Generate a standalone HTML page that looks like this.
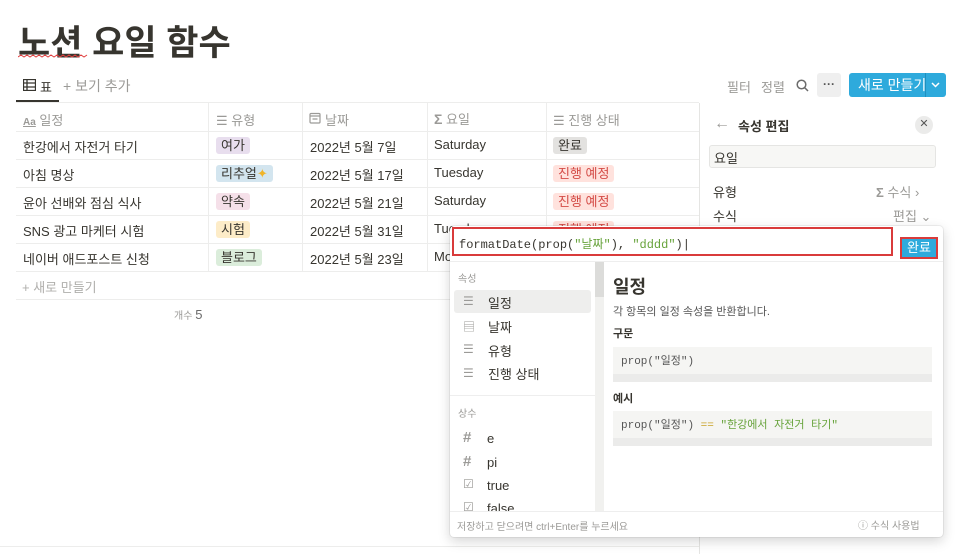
<!DOCTYPE html>
<html><head><meta charset="utf-8"><style>
*{box-sizing:border-box;margin:0;padding:0}
body{width:966px;height:554px;overflow:hidden;background:#fff;font-family:"Liberation Sans","Noto Sans CJK KR",sans-serif;color:#37352f;position:relative;font-size:13px}
.a{position:absolute;white-space:nowrap}
.g{color:#9b9a97}
.tag{position:absolute;height:17px;line-height:17px;padding:0 5px;border-radius:3px;font-size:13px}
.hl{position:absolute;height:1px;background:#ededec}
.vl{position:absolute;width:1px;background:#ededec}
.mono{font-family:"Liberation Mono","Noto Sans CJK KR",monospace}
</style></head><body>
<div class="a" style="left:18px;top:15px;font-size:35px;font-weight:700;color:#37352f">노션 요일 함수</div>
<svg class="a" style="left:18px;top:54px" width="70" height="5"><path d="M0 3 L3 1 L6 3 L9 1 L12 3 L15 1 L18 3 L21 1 L24 3 L27 1 L30 3 L33 1 L36 3 L39 1 L42 3 L45 1 L48 3 L51 1 L54 3 L57 1 L60 3 L63 1 L66 3 L69 1" stroke="#e03e3e" fill="none" stroke-width="1"/></svg>

<svg class="a" style="left:23px;top:79px" width="13" height="12"><rect x="0.5" y="0.5" width="12" height="11" fill="none" stroke="#37352f" stroke-width="1.3"/><path d="M0 4H13M0 8H13M4 0V12" stroke="#37352f" stroke-width="1.3"/></svg>
<div class="a" style="left:40px;top:77px;font-size:13px">표</div>
<div class="a g" style="left:63px;top:76px;font-size:14px">+ 보기 추가</div>
<div class="a" style="left:16px;top:100px;width:43px;height:2px;background:#37352f"></div>
<div class="hl" style="left:16px;top:102px;width:683px"></div>

<div class="a g" style="left:727px;top:77px">필터</div>
<div class="a g" style="left:761px;top:77px">정렬</div>
<svg class="a" style="left:796px;top:79px" width="13" height="13"><circle cx="5.5" cy="5.5" r="4.3" fill="none" stroke="#6b6b6b" stroke-width="1.5"/><path d="M8.5 8.5L12 12" stroke="#6b6b6b" stroke-width="1.5"/></svg>
<div class="a" style="left:817px;top:73px;width:24px;height:24px;background:#efefef;border-radius:3px;text-align:center;line-height:22px;font-size:12px;color:#555;font-weight:700">···</div>
<div class="a" style="left:849px;top:73px;width:97px;height:24px;background:#2eaadc;border-radius:3px;color:#fff;font-size:14px;line-height:24px;padding-left:9px">새로 만들기</div>
<div class="a" style="left:925px;top:73px;width:1px;height:24px;background:#1f8fbf"></div>
<svg class="a" style="left:931px;top:82px" width="9" height="6"><path d="M1 1L4.5 4.5L8 1" stroke="#fff" fill="none" stroke-width="1.5"/></svg>

<!-- table -->
<div class="hl" style="left:16px;top:131px;width:683px"></div>
<div class="hl" style="left:16px;top:159px;width:683px"></div>
<div class="hl" style="left:16px;top:187px;width:683px"></div>
<div class="hl" style="left:16px;top:215px;width:683px"></div>
<div class="hl" style="left:16px;top:243px;width:683px"></div>
<div class="hl" style="left:16px;top:271px;width:683px"></div>
<div class="hl" style="left:16px;top:299px;width:683px"></div>
<div class="vl" style="left:208px;top:103px;height:168px"></div>
<div class="vl" style="left:302px;top:103px;height:168px"></div>
<div class="vl" style="left:427px;top:103px;height:168px"></div>
<div class="vl" style="left:546px;top:103px;height:168px"></div>
<div class="vl" style="left:699px;top:103px;height:451px;background:#e5e5e3"></div>

<div class="a g" style="left:23px;top:110px;font-size:13px"><span style="font-size:10px;font-weight:700;text-decoration:underline">Aa</span> 일정</div>
<div class="a g" style="left:216px;top:110px">☰ 유형</div>
<svg class="a" style="left:309px;top:112px" width="12" height="12"><rect x="1" y="1.5" width="10" height="9.5" rx="1" fill="none" stroke="#9b9a97" stroke-width="1.2"/><path d="M1 4H11M3.5 7H8.5" stroke="#9b9a97" stroke-width="1.2"/></svg>
<div class="a g" style="left:325px;top:110px">날짜</div>
<div class="a g" style="left:434px;top:109px"><b style="font-size:14px">Σ</b> 요일</div>
<div class="a g" style="left:553px;top:110px">☰ 진행 상태</div>

<div class="a" style="left:23px;top:137px">한강에서 자전거 타기</div>
<div class="a" style="left:23px;top:165px">아침 명상</div>
<div class="a" style="left:23px;top:193px">윤아 선배와 점심 식사</div>
<div class="a" style="left:23px;top:221px">SNS 광고 마케터 시험</div>
<div class="a" style="left:23px;top:249px">네이버 애드포스트 신청</div>

<div class="tag" style="left:216px;top:137px;background:#e8deee">여가</div>
<div class="tag" style="left:216px;top:165px;background:#d3e5ef">리추얼<span style="color:#f0b429">✦</span></div>
<div class="tag" style="left:216px;top:193px;background:#f5e0e9">약속</div>
<div class="tag" style="left:216px;top:221px;background:#fdecc8">시험</div>
<div class="tag" style="left:216px;top:249px;background:#dbeddb">블로그</div>

<div class="a" style="left:310px;top:137px">2022년 5월 7일</div>
<div class="a" style="left:310px;top:165px">2022년 5월 17일</div>
<div class="a" style="left:310px;top:193px">2022년 5월 21일</div>
<div class="a" style="left:310px;top:221px">2022년 5월 31일</div>
<div class="a" style="left:310px;top:249px">2022년 5월 23일</div>

<div class="a" style="left:434px;top:137px">Saturday</div>
<div class="a" style="left:434px;top:165px">Tuesday</div>
<div class="a" style="left:434px;top:193px">Saturday</div>
<div class="a" style="left:434px;top:221px">Tuesday</div>
<div class="a" style="left:434px;top:249px">Monday</div>

<div class="tag" style="left:553px;top:137px;background:#e3e2e0">완료</div>
<div class="tag" style="left:553px;top:165px;background:#ffe2dd;color:#d44c47">진행 예정</div>
<div class="tag" style="left:553px;top:193px;background:#ffe2dd;color:#d44c47">진행 예정</div>
<div class="tag" style="left:553px;top:221px;background:#ffe2dd;color:#d44c47">진행 예정</div>

<div class="a g" style="left:22px;top:277px;font-size:13px;color:#b0afac">+ 새로 만들기</div>
<div class="a g" style="left:174px;top:307px;font-size:10px">개수 <span style="font-size:13px;color:#6b6b6b">5</span></div>
<div class="hl" style="left:0;top:546px;width:699px"></div>

<!-- right panel -->
<div class="a g" style="left:714px;top:115px;font-size:16px">←</div>
<div class="a" style="left:738px;top:116px;font-weight:700;font-size:13px">속성 편집</div>
<div class="a" style="left:915px;top:116px;width:18px;height:18px;border-radius:50%;background:#ebebea;text-align:center;line-height:17px;font-size:11px;color:#555">✕</div>
<div class="a" style="left:709px;top:145px;width:227px;height:23px;background:#f7f7f5;border:1px solid #e5e5e3;border-radius:3px;padding:2px 4px;font-size:13px">요일</div>
<div class="a" style="left:713px;top:182px">유형</div>
<div class="a g" style="left:876px;top:182px"><b>Σ</b> 수식 ›</div>
<div class="a" style="left:713px;top:206px">수식</div>
<div class="a g" style="left:893px;top:206px">편집 ⌄</div>

<!-- popup -->
<div class="a" style="left:450px;top:226px;width:493px;height:311px;background:#fff;border-radius:4px;box-shadow:0 0 0 1px rgba(15,15,15,.06),0 4px 12px rgba(15,15,15,.18)"></div>
<div class="a mono" style="left:452px;top:227px;width:441px;height:29px;border:2px solid #d93b3b;background:#fff;padding:6px 5px;font-size:12px;color:#37352f">formatDate(prop(<span style="color:#67a33b">"날짜"</span>), <span style="color:#67a33b">"dddd"</span>)|</div>
<div class="a" style="left:900px;top:237px;width:38px;height:22px;border:2px solid #d93b3b;background:#2eaadc;color:#fff;text-align:center;line-height:18px;font-size:13px">완료</div>
<div class="hl" style="left:450px;top:261px;width:493px;background:#eee"></div>
<div class="a" style="left:595px;top:262px;width:9px;height:249px;background:#f1f1ef"></div>
<div class="a" style="left:595px;top:262px;width:9px;height:35px;background:#dcdcda"></div>
<div class="a g" style="left:458px;top:270px;font-size:10px">속성</div>
<div class="a" style="left:454px;top:290px;width:137px;height:23px;background:#eeeeed;border-radius:3px"></div>
<div class="a g" style="left:463px;top:294px;font-size:12px">☰</div><div class="a" style="left:488px;top:293px">일정</div>
<div class="a g" style="left:463px;top:318px;font-size:12px">▤</div><div class="a" style="left:488px;top:317px">날짜</div>
<div class="a g" style="left:463px;top:342px;font-size:12px">☰</div><div class="a" style="left:488px;top:341px">유형</div>
<div class="a g" style="left:463px;top:366px;font-size:12px">☰</div><div class="a" style="left:488px;top:364px">진행 상태</div>
<div class="hl" style="left:450px;top:395px;width:145px;background:#eee"></div>
<div class="a g" style="left:458px;top:405px;font-size:10px">상수</div>
<div class="a g" style="left:463px;top:429px;font-size:15px;font-weight:700">#</div><div class="a" style="left:487px;top:431px">e</div>
<div class="a g" style="left:463px;top:453px;font-size:15px;font-weight:700">#</div><div class="a" style="left:487px;top:455px">pi</div>
<div class="a g" style="left:463px;top:477px;font-size:12px">☑</div><div class="a" style="left:487px;top:478px">true</div>
<div class="a" style="left:450px;top:497px;width:145px;height:14px;overflow:hidden"><div class="a g" style="left:13px;top:3px;font-size:12px">☑</div><div class="a" style="left:37px;top:4px;color:#37352f">false</div></div>

<div class="a" style="left:613px;top:273px;font-size:18px;font-weight:700">일정</div>
<div class="a" style="left:613px;top:303px;font-size:11px;color:#555">각 항목의 일정 속성을 반환합니다.</div>
<div class="a" style="left:613px;top:325px;font-size:11px;font-weight:700">구문</div>
<div class="a" style="left:613px;top:347px;width:319px;height:35px;background:#f5f5f3"></div>
<div class="a" style="left:613px;top:374px;width:319px;height:8px;background:#ebebea"></div>
<div class="a mono" style="left:621px;top:352px;font-size:11px;color:#555">prop("일정")</div>
<div class="a" style="left:613px;top:390px;font-size:11px;font-weight:700">예시</div>
<div class="a" style="left:613px;top:411px;width:319px;height:35px;background:#f5f5f3"></div>
<div class="a" style="left:613px;top:438px;width:319px;height:8px;background:#ebebea"></div>
<div class="a mono" style="left:621px;top:416px;font-size:11px;color:#555">prop("일정") <span style="color:#c9a227">==</span> <span style="color:#67a33b">"한강에서 자전거 타기"</span></div>

<div class="hl" style="left:450px;top:511px;width:493px;background:#eee"></div>
<div class="a g" style="left:457px;top:518px;font-size:10px">저장하고 닫으려면 ctrl+Enter를 누르세요</div>
<div class="a g" style="left:858px;top:517px;font-size:10px">ⓘ 수식 사용법</div>
</body></html>
